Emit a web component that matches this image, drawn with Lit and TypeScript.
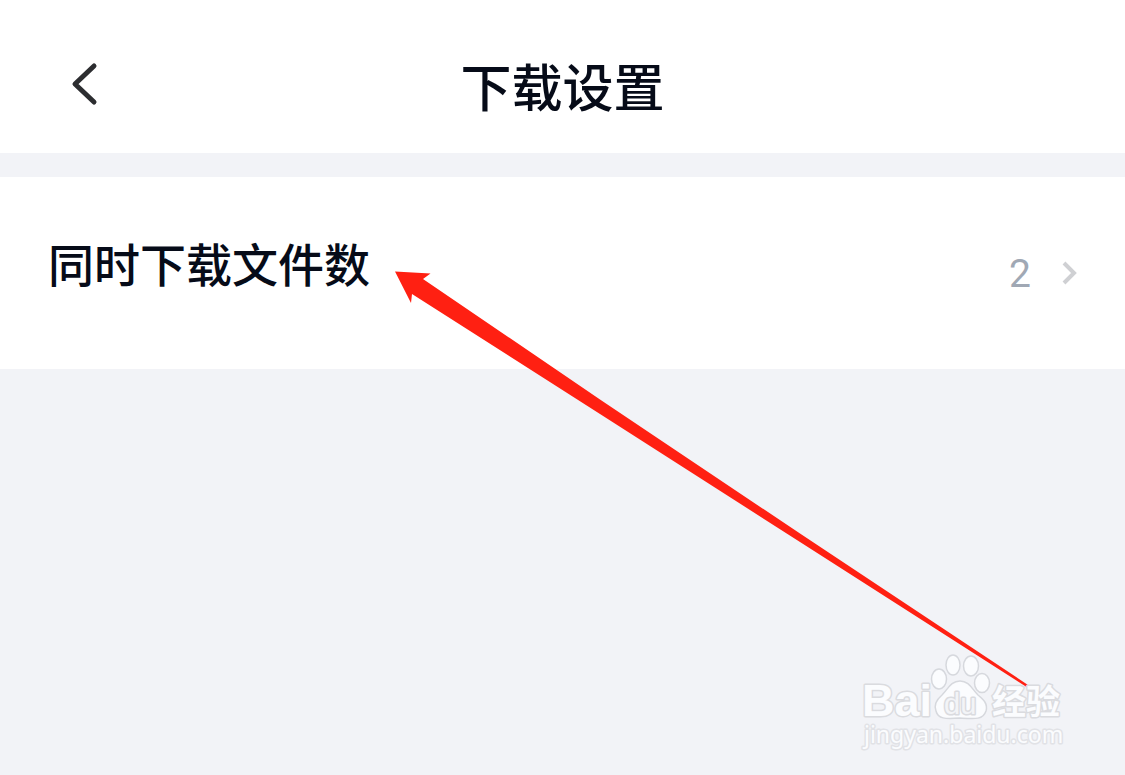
import { LitElement, html, css } from "lit";
import { customElement, property } from "lit/decorators.js";

@customElement("settings-row")
class SettingsRow extends LitElement {
  @property() label = "";
  @property() value = "";

  static styles = css`
    :host { display: block; }
    .row {
      display: flex;
      align-items: center;
      width: 100%;
      box-sizing: border-box;
      height: 192px;
      padding: 0 47px 0 48px;
      border: 0;
      background: #fff;
      font: inherit;
      color: #060b18;
      text-align: left;
      cursor: pointer;
    }
    .label {
      flex: 1;
      font-size: 46px;
      font-weight: 500;
      line-height: 64px;
      padding-bottom: 22px;
    }
    .value {
      font-family: Roboto, "Noto Sans", sans-serif;
      font-size: 39px;
      line-height: 48px;
      padding-top: 2px;
      color: #a0a8b4;
    }
    .chevron { display: block; margin-left: 29px; }
  `;

  render() {
    return html`
      <button class="row" type="button">
        <span class="label">${this.label}</span>
        <span class="value">${this.value}</span>
        <svg class="chevron" width="18" height="28" viewBox="0 0 18 28" fill="none" aria-hidden="true">
          <path d="M4 4L14 14L4 24" stroke="#cfd0d3" stroke-width="4" />
        </svg>
      </button>
    `;
  }
}

@customElement("app-root")
class AppRoot extends LitElement {
  static styles = css`
    :host {
      display: block;
      position: relative;
      min-height: 100vh;
      overflow: hidden;
      background: #f2f3f7;
      font-family: "Noto Sans CJK SC", "Noto Sans", sans-serif;
      color: #060b18;
    }
    .header {
      display: grid;
      grid-template-columns: 120px 1fr 120px;
      align-items: center;
      height: 153px;
      box-sizing: border-box;
      padding-top: 16px;
      background: #fff;
    }
    .back {
      justify-self: end;
      width: 56px;
      height: 56px;
      margin-right: 8px;
      padding: 0;
      border: 0;
      background: none;
      cursor: pointer;
    }
    .back svg { display: block; }
    .title {
      margin: 0;
      text-align: center;
      font-size: 51px;
      font-weight: 500;
      line-height: 72px;
    }
    .list { margin-top: 24px; }
    .arrow {
      position: absolute;
      left: 395px;
      top: 271px;
      pointer-events: none;
    }
    .mark {
      position: absolute;
      right: 56px;
      bottom: 20px;
      pointer-events: none;
    }
    .mark text {
      fill: #fbfcfe;
      stroke: #dadbdf;
      stroke-width: 3px;
      stroke-linejoin: round;
      paint-order: stroke;
    }
    .mark .brand { font: 700 45px "Liberation Sans", sans-serif; }
    .mark .du { font: 400 29px "Liberation Sans", sans-serif; fill: #f3f4f7; }
    .mark .cn { font: 700 34px "Noto Sans CJK SC", sans-serif; }
    .mark .site { font: 400 23px "Noto Sans", sans-serif; stroke: #e1e2e6; }
  `;

  render() {
    return html`
      <header class="header">
        <button class="back" type="button" aria-label="返回">
          <svg width="56" height="56" viewBox="0 0 56 56" fill="none">
            <path d="M38 9L19 27L38 45" stroke="#2c2d30" stroke-width="5" stroke-linecap="round" stroke-linejoin="round" />
          </svg>
        </button>
        <h1 class="title">下载设置</h1>
      </header>
      <main class="list">
        <settings-row label="同时下载文件数" value="2"></settings-row>
      </main>
      <svg class="arrow" width="650" height="430" viewBox="0 0 650 430" aria-hidden="true">
        <path d="M0 0.5L35.5 2.5L28 8L205 128.5L405 262.5L642 420L641 422L405 271L205 143L17 23L16 32Z" fill="#ff2012" />
      </svg>
      <svg class="mark" width="210" height="105" viewBox="0 0 210 105">
        <g fill="#fbfcfe" stroke="#d6d8dd" stroke-width="1.5">
          <ellipse cx="80" cy="29" rx="7.5" ry="10" />
          <ellipse cx="94" cy="15" rx="7" ry="10" />
          <ellipse cx="112" cy="16" rx="7.5" ry="10" />
          <ellipse cx="123" cy="33" rx="7.5" ry="9.5" />
          <path d="M101 31C92 31 89 39 83 45C76 51 75 56 77 61C79 69 86 69 101 68C116 69 124 70 127 61C129 54 125 50 119 45C113 39 110 31 101 31Z" />
        </g>
        <text class="brand" x="3" y="66">Bai</text>
        <text class="du" x="85" y="64">du</text>
        <text class="cn" x="133" y="64">经验</text>
        <text class="site" x="5" y="93">jingyan.baidu.com</text>
      </svg>
    `;
  }
}
